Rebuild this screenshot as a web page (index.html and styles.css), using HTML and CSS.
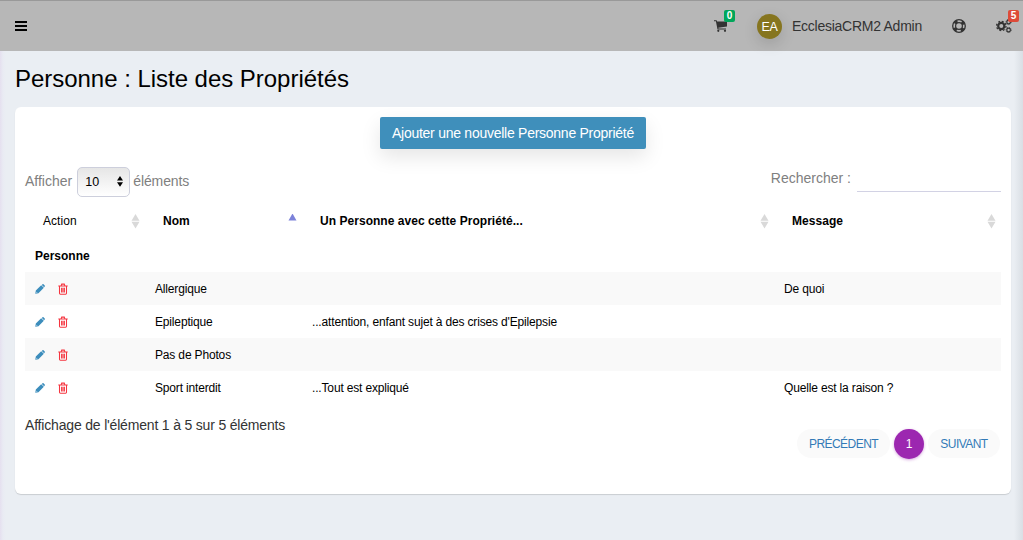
FILE: index.html
```html
<!DOCTYPE html>
<html lang="fr">
<head>
<meta charset="utf-8">
<title>Personne : Liste des Propriétés</title>
<link rel="stylesheet" href="styles.css">
</head>
<body>
<svg class="defs" aria-hidden="true">
  <symbol id="pencil" viewBox="0 0 11 11"><path d="M.3 10.700l.6-3.500L6.800 1.300l2.900 2.900-5.900 5.900zM7.500 1L8.200.3q.6-.5 1.200 0l1.300 1.300q.5.6 0 1.200l-.7.7z"/><path d="M1.300 8.700l1 1" fill="none" stroke="#fff" stroke-width=".7"/></symbol>
  <symbol id="trash" viewBox="0 0 10 12"><path d="M.3 2.900h9.400M3.200 2.600l.5-1.500h2.600l.5 1.500M1.500 3v7.300q0 .9.9.9h5.200q.9 0 .9-.9V3M3.600 4.800v4.600M5 4.800v4.600M6.400 4.800v4.600" fill="none" stroke="currentColor" stroke-width="1.050"/></symbol>
  <symbol id="sort" viewBox="0 0 8 15"><path d="M4 0l4 6.700H0zM0 7.700h8l-4 6.700z"/></symbol>
</svg>
<header class="navbar">
  <svg class="menu" viewBox="0 0 12 11"><path d="M0 0h12v2H0zM0 4h12v2H0zM0 8h12v2H0z"/></svg>
  <nav class="tools">
    <span class="tool cart"><svg width="13" height="12" viewBox="0 0 13 12"><path d="M0 .3h2.600l.5 1.300H13v5L4.300 7.700l.2.800h7.500v1H3.500L1.900 1.300H0z"/><circle cx="4.300" cy="10.800" r="1.100"/><circle cx="11" cy="10.800" r="1.100"/></svg><b class="badge green">0</b></span>
    <span class="avatar">EA</span>
    <span class="user">EcclesiaCRM2 Admin</span>
    <span class="tool help"><svg width="14" height="14" viewBox="0 0 14 14" fill="none" stroke="#333"><circle cx="7" cy="7" r="6.300" stroke-width="1.300"/><circle cx="7" cy="7" r="3.400" stroke-width="1.200"/><circle cx="7" cy="7" r="4.900" stroke-width="3" stroke-dasharray="3.400 4.300" stroke-dashoffset="-2.150"/></svg></span>
    <span class="tool gears"><svg width="16" height="14" viewBox="0 0 16 14" fill="none" stroke="#333"><circle cx="5.300" cy="7" r="3.100" stroke-width="2.200"/><circle cx="5.300" cy="7" r="4.700" stroke-width="1.300" stroke-dasharray="1.850 1.840"/><circle cx="12.600" cy="3" r="1.800" stroke-width="1.200"/><circle cx="12.600" cy="3" r="2.600" stroke-width=".8" stroke-dasharray="1.100 .94"/><circle cx="12.600" cy="11" r="1.800" stroke-width="1.200"/><circle cx="12.600" cy="11" r="2.600" stroke-width=".8" stroke-dasharray="1.100 .94"/></svg><b class="badge red">5</b></span>
  </nav>
</header>
<main class="content">
  <h1>Personne : Liste des Propriétés</h1>
  <section class="card">
    <a class="add">Ajouter une nouvelle Personne Propriété</a>
    <div class="filters">
      <label class="length">Afficher <span class="select">10<svg width="6" height="11" viewBox="0 0 6 11"><path d="M3 0l3 4.500H0zM0 6.200h6l-3 4.500z"/></svg></span> <span class="elements">éléments</span></label>
      <label class="search">Rechercher : <input type="text"></label>
    </div>
    <table>
      <colgroup><col class="c1"><col class="c2"><col class="c3"><col class="c4"></colgroup>
      <thead><tr>
        <th class="light"><div>Action<svg class="sort"><use href="#sort"/></svg></div></th>
        <th><div>Nom<svg class="sort asc" viewBox="0 0 8 15"><path d="M4-.5l4 7H0z"/></svg></div></th>
        <th><div>Un Personne avec cette Propriété...<svg class="sort"><use href="#sort"/></svg></div></th>
        <th><div>Message<svg class="sort"><use href="#sort"/></svg></div></th>
      </tr></thead>
      <tbody>
        <tr class="group"><td colspan="4">Personne</td></tr>
        <tr class="odd"><td><span class="actions"><svg class="edit"><use href="#pencil"/></svg><svg class="del"><use href="#trash"/></svg></span></td><td>Allergique</td><td></td><td>De quoi</td></tr>
        <tr><td><span class="actions"><svg class="edit"><use href="#pencil"/></svg><svg class="del"><use href="#trash"/></svg></span></td><td>Epileptique</td><td>...attention, enfant sujet à des crises d'Epilepsie</td><td></td></tr>
        <tr class="odd"><td><span class="actions"><svg class="edit"><use href="#pencil"/></svg><svg class="del"><use href="#trash"/></svg></span></td><td>Pas de Photos</td><td></td><td></td></tr>
        <tr><td><span class="actions"><svg class="edit"><use href="#pencil"/></svg><svg class="del"><use href="#trash"/></svg></span></td><td>Sport interdit</td><td>...Tout est expliqué</td><td>Quelle est la raison ?</td></tr>
      </tbody>
    </table>
    <div class="footer">
      <span class="info">Affichage de l'élément 1 à 5 sur 5 éléments</span>
      <div class="pages"><a class="prev">PRÉCÉDENT</a><a class="current">1</a><a class="next">SUIVANT</a></div>
    </div>
  </section>
</main>
</body>
</html>
```
FILE: styles.css
```css
* { box-sizing: border-box; }
body {
  margin: 0;
  height: 540px;
  overflow: hidden;
  background: linear-gradient(90deg, #e5e0ef 0, #e9ebf3 3px, #eaeef3 6px, #eaeef3 1014px, #d9dee4 1023px);
  font-family: "Liberation Sans", Arial, sans-serif;
  font-size: 14px;
  color: #333;
}
.defs { display: none; }
svg { flex: none; }
.navbar {
  display: flex;
  align-items: center;
  justify-content: space-between;
  height: 51px;
  padding: 0 11px 0 15px;
  border-top: 1px solid #999;
  background: #b7b7b7;
}
.menu { width: 12px; height: 11px; margin-top: 1px; fill: #000; }
.tools { display: flex; align-items: center; height: 100%; }
.tool { position: relative; display: flex; fill: #333; }
.cart { margin-right: 30px; }
.badge {
  position: absolute;
  height: 12px;
  width: 11px;
  border-radius: 2px;
  color: #fff;
  font-size: 10px;
  line-height: 12px;
  text-align: center;
}
.green { left: 10px; top: -10px; background: #00a65a; }
.red { left: 12px; top: -9px; background: #dd4b39; }
.avatar {
  width: 25px;
  height: 25px;
  border-radius: 50%;
  background: #86751f;
  color: #fff;
  font-size: 12.500px;
  letter-spacing: -.3px;
  line-height: 26px;
  text-align: center;
  box-shadow: 0 5px 15px rgba(0, 0, 0, .14);
}
.user { width: 132px; margin: 0 28px 0 10px; letter-spacing: -.26px; white-space: nowrap; }
.help { margin-right: 30px; }
.content { padding: 0 12px 0 15px; }
h1 {
  margin: 0;
  height: 56px;
  line-height: 55px;
  font-size: 24px;
  font-weight: 300;
  letter-spacing: -.03px;
  color: #000;
}
.card {
  display: flex;
  flex-direction: column;
  height: 387px;
  padding: 10px 10px 0;
  border-radius: 6px;
  background: #fff;
  box-shadow: 0 1px 1px rgba(0, 0, 0, .14);
}
.add {
  align-self: center;
  width: 266px;
  height: 32px;
  border-radius: 2px;
  background: #3f8fbb;
  color: #fff;
  line-height: 32px;
  text-align: center;
  letter-spacing: -.26px;
  white-space: nowrap;
  box-shadow: 0 8px 20px rgba(0, 0, 0, .1);
}
.filters { display: flex; justify-content: space-between; height: 54px; padding-top: 17px; color: #808080; }
.length { display: flex; align-items: center; height: 30px; }
.select {
  display: flex;
  align-items: center;
  justify-content: space-between;
  width: 53px;
  height: 30px;
  margin: 1px 3px 0 5px;
  padding: 0 6px 0 7px;
  border: 1px solid #cdcfdc;
  border-radius: 5px;
  background: linear-gradient(#e6e6e6, #fff);
  color: #000;
  font-size: 12.500px;
}
.elements { letter-spacing: -.1px; }
.search { display: flex; align-items: flex-start; height: 26px; line-height: 24px; }
.search input { width: 144px; height: 26px; margin-left: 6px; padding: 0; border: 0; border-bottom: 1px solid #d2d2e4; background: none; }
table { width: 976px; table-layout: fixed; border-collapse: collapse; color: #000; font-size: 12px; letter-spacing: -.16px; }
.c1 { width: 120px; }
.c2 { width: 157px; }
.c3 { width: 472px; }
.c4 { width: 227px; }
th { height: 36px; padding: 0 5px 0 18px; text-align: left; letter-spacing: .04px; }
.light { font-weight: 300; }
th div { display: flex; align-items: center; justify-content: space-between; }
.sort { width: 9px; height: 15px; fill: #d9d9d9; }
.asc { fill: #7c82d9; }
td { height: 33px; padding: 0 10px; line-height: 16px; }
.group td { font-weight: 700; letter-spacing: 0; }
.odd { background: #f9f9f9; }
.actions { display: flex; align-items: center; gap: 13px; }
.edit { width: 10px; height: 10px; fill: #3c8dbc; }
.del { width: 10px; height: 12px; color: #f5343f; }
.footer { display: flex; justify-content: space-between; }
.info { margin-top: 13px; letter-spacing: -.18px; }
.pages { display: flex; gap: 4px; margin: 25px 1px 0 0; font-size: 12px; line-height: 30px; text-align: center; letter-spacing: -.55px; }
.pages a { height: 29px; border-radius: 15px; background: #fafafa; color: #337ab7; }
.prev { width: 93px; }
.next { width: 72px; }
.pages .current { width: 30px; height: 30px; background: #9c27b0; color: #fff; box-shadow: 0 1px 3px rgba(156, 39, 176, .4); letter-spacing: 0; }
```
